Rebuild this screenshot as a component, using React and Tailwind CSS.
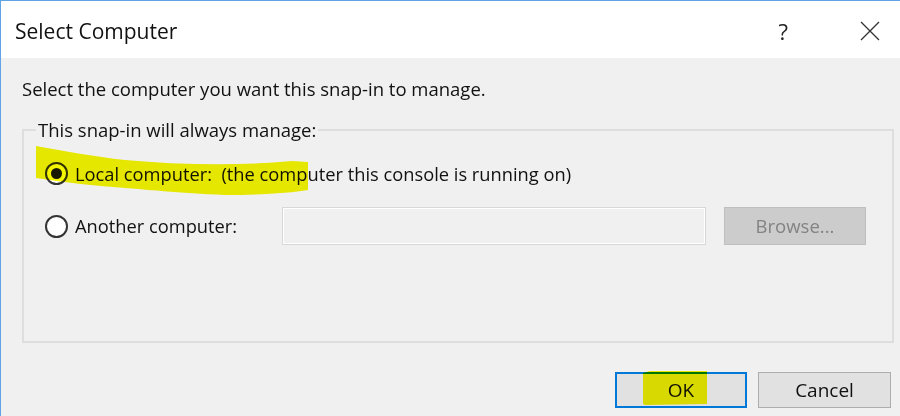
import React from "react";

function Radio({ checked }) {
  return (
    <span className="relative flex h-[23px] w-[23px] shrink-0 items-center justify-center rounded-full border-2 border-[#333333] bg-white">
      {checked && <span className="h-[11px] w-[11px] rounded-full bg-[#1a1a1a]" />}
    </span>
  );
}

export default function App() {
  return (
    <div
      className="relative flex h-[416px] w-[900px] flex-col overflow-hidden border-l border-t border-[#5ea4e6] bg-[#f0f0f0] text-black"
      style={{ fontFamily: '"Open Sans", "Noto Sans", sans-serif' }}
    >
      {/* Title bar */}
      <div className="flex h-[57px] shrink-0 items-center bg-white pl-[14px] pt-[3px]">
        <span className="text-[21px] leading-none text-[#111]">Select Computer</span>
        <span className="ml-auto mr-[72px] text-[22px] leading-none text-[#222]">?</span>
        <svg width="20" height="20" viewBox="0 0 20 20" className="mr-[20px]">
          <path d="M1 1 L19 19 M19 1 L1 19" stroke="#333" strokeWidth="1.3" fill="none" />
        </svg>
      </div>

      {/* Body */}
      <div className="flex flex-1 flex-col pl-[21px] pr-[6px]">
        <div className="mt-[20px] text-[18.5px] leading-[22px] text-[#111]">
          Select the computer you want this snap-in to manage.
        </div>

        <fieldset className="mt-[19px] h-[224px] w-[872px] min-w-0 border-2 border-[#dedede]">
          <legend className="ml-[12px] px-[2px] text-[18.5px] leading-[22px] text-[#111]">
            This snap-in will always manage:
          </legend>

          <div className="flex flex-col pl-[21px]">
            <div className="mt-[21px] flex items-center gap-[7px]">
              <Radio checked />
              <span className="text-[18.3px] leading-[22px] text-[#111]">
                Local computer:&nbsp; (the computer this console is running on)
              </span>
            </div>

            <div className="mt-[22px] flex items-center">
              <div className="flex w-[237px] items-center gap-[7px]">
                <Radio />
                <span className="text-[18.3px] leading-[22px] text-[#111]">Another computer:</span>
              </div>
              <div className="h-[38px] w-[424px] border border-[#d8d8d8] bg-[#f0f0f0] shadow-[inset_0_0_0_1px_#ffffff]" />
              <div className="ml-[18px] flex h-[38px] w-[142px] items-center justify-center border border-[#bfbfbf] bg-[#cccccc] text-[18.5px] text-[#838383]">
                Browse...
              </div>
            </div>
          </div>
        </fieldset>

        <div className="mt-[29px] flex justify-end gap-[11px] pr-[3px]">
          <div className="flex h-[36px] w-[132px] items-center justify-center border-2 border-[#0078d7] bg-[#e1e1e1] text-[19px] text-[#111]">
            OK
          </div>
          <div className="flex h-[36px] w-[133px] items-center justify-center border border-[#adadad] bg-[#e1e1e1] text-[19px] text-[#111]">
            Cancel
          </div>
        </div>
      </div>

      {/* Highlighter marks (annotation overlay) */}
      <svg
        className="pointer-events-none absolute left-[-1px] top-[-1px] mix-blend-multiply"
        width="900"
        height="416"
        viewBox="0 0 900 416"
      >
        <path
          d="M36,146 C60,150 95,157 125,160 C180,165 240,166 292,161 L308,162 L308,190 C290,193 260,195 225,195 C180,193 140,189 125,188 C100,186 75,184 36,178 Z"
          fill="#f4f600"
        />
        <path d="M643,373 L650,371 L707,371 L707,404 L645,405 L643,404 Z" fill="#f4f600" />
      </svg>
    </div>
  );
}
